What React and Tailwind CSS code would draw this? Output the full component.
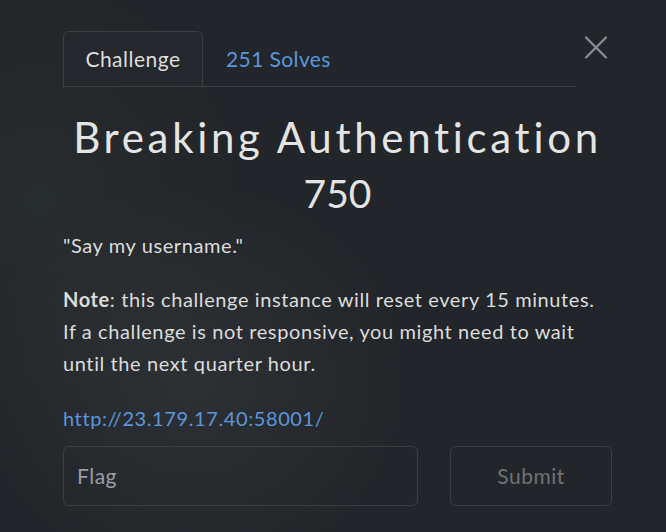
import React from 'react';

export default function App() {
  return (
    <div
      className="min-h-[532px] w-full bg-[#222529] bg-[radial-gradient(ellipse_220px_200px_at_190px_380px,rgba(255,255,255,0.05),transparent),radial-gradient(ellipse_200px_220px_at_40px_200px,rgba(120,160,130,0.06),transparent)] text-[#dcdcdc]"
      style={{ fontFamily: 'Lato, "Noto Sans", sans-serif' }}
    >
      <div className="pt-[31px] pl-[63px] pr-[54px]">
        {/* Tabs + close */}
        <div className="flex items-start">
          <div className="flex flex-1 border-b border-[#3b3e43]">
            <div className="-mb-px flex h-[55px] w-[140px] items-center justify-center rounded-t-[6px] border border-b-0 border-[#3b3e43] bg-[#24272b] text-[21px] tracking-[0.5px] text-[#dedede]">
              Challenge
            </div>
            <div className="flex h-[55px] items-center px-[23px] text-[21px] tracking-[0.4px] text-[#5b97dd]">
              251 Solves
            </div>
          </div>
          <button className="ml-[4px] flex h-[32px] w-[32px] items-center justify-center text-[#8c8f93]">
            <svg width="24" height="23" viewBox="0 0 24 23" fill="none" stroke="currentColor" strokeWidth="2.2" strokeLinecap="round">
              <path d="M2 1.5 L22 21.5 M22 1.5 L2 21.5" />
            </svg>
          </button>
        </div>

        {/* Title */}
        <h1 className="mt-[22px] text-center text-[42px] leading-[56px] tracking-[3.7px] text-[#e4e4e4]">
          Breaking Authentication
        </h1>
        <div className="mt-[5px] text-center text-[39px] leading-[46px] text-[#e4e4e4]">750</div>

        {/* Description */}
        <p className="mt-[13px] text-[20px] leading-[32px] tracking-[0.6px]">"Say my username."</p>
        <p className="mt-[22px] text-[20px] leading-[32px] tracking-[0.6px]">
          <b className="font-bold">Note</b>: this challenge instance will reset every 15 minutes. If a
          challenge is not responsive, you might need to wait until the next quarter hour.
        </p>
        <a href="#" className="mt-[23px] block text-[20px] leading-[32px] tracking-[0.6px] text-[#5b97dd]">
          http://23.179.17.40:58001/
        </a>

        {/* Flag form */}
        <div className="mt-[12px] flex gap-[32px]">
          <div className="flex h-[60px] w-[355px] items-center rounded-[6px] border border-[#3b3e43] px-[13px] text-[21px] tracking-[0.5px] text-[#9a9da1]">
            Flag
          </div>
          <button className="flex h-[60px] w-[162px] items-center justify-center rounded-[6px] border border-[#3b3e43] text-[21px] tracking-[0.5px] text-[#6f7276]">
            Submit
          </button>
        </div>
      </div>
    </div>
  );
}
